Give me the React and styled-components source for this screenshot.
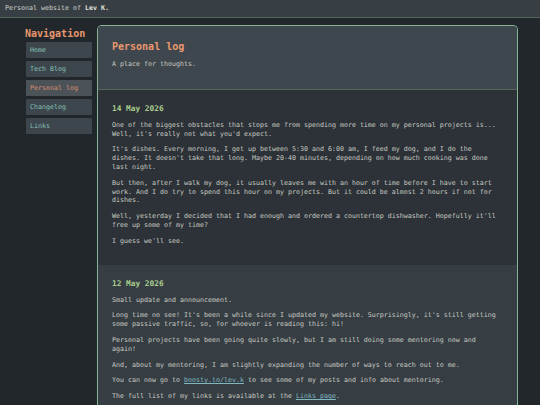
import React from 'react'
import styled, { createGlobalStyle } from 'styled-components'

const GlobalStyle = createGlobalStyle`
    html, body {
        margin: 0;
        padding: 0;
        background: #22272c;
        font-family: "DejaVu Sans Mono", "Liberation Mono", monospace;
        color: #c9c9c1;
    }
    * {
        box-sizing: border-box;
    }
`

const navItems = [
    { label: 'Home' },
    { label: 'Tech Blog' },
    { label: 'Personal log', active: true },
    { label: 'Changelog' },
    { label: 'Links' },
]

function App() {
    return (
        <>
            <GlobalStyle />
            <Page>
                <TopBar>
                    Personal website of <strong>Lev K.</strong>
                </TopBar>
                <Layout>
                    <Nav>
                        <NavTitle>Navigation</NavTitle>
                        {navItems.map((item) => (
                            <NavItem key={item.label} $active={item.active}>
                                {item.label}
                            </NavItem>
                        ))}
                    </Nav>
                    <Card>
                        <CardHeader>
                            <Title>Personal log</Title>
                            <Subtitle>A place for thoughts.</Subtitle>
                        </CardHeader>
                        <Post $tone="dark">
                            <PostDate>14 May 2026</PostDate>
                            <P>One of the biggest obstacles that stops me from spending more time on my personal projects is... Well, it's really not what you'd expect.</P>
                            <P>It's dishes. Every morning, I get up between 5:30 and 6:00 am, I feed my dog, and I do the dishes. It doesn't take that long. Maybe 20-40 minutes, depending on how much cooking was done last night.</P>
                            <P>But then, after I walk my dog, it usually leaves me with an hour of time before I have to start work. And I do try to spend this hour on my projects. But it could be almost 2 hours if not for dishes.</P>
                            <P>Well, yesterday I decided that I had enough and ordered a countertop dishwasher. Hopefully it'll free up some of my time?</P>
                            <P>I guess we'll see.</P>
                        </Post>
                        <Post $tone="light">
                            <PostDate>12 May 2026</PostDate>
                            <P>Small update and announcement.</P>
                            <P>Long time no see! It's been a while since I updated my website. Surprisingly, it's still getting some passive traffic, so, for whoever is reading this: hi!</P>
                            <P>Personal projects have been going quite slowly, but I am still doing some mentoring now and again!</P>
                            <P>And, about my mentoring, I am slightly expanding the number of ways to reach out to me.</P>
                            <P>You can now go to <A href="#">boosty.to/lev.k</A> to see some of my posts and info about mentoring.</P>
                            <P>The full list of my links is available at the <A href="#">Links page</A>.</P>
                        </Post>
                    </Card>
                </Layout>
            </Page>
        </>
    )
}

const Page = styled.div`
    width: 540px;
    height: 405px;
    overflow: hidden;
    font-size: 6.65px;
    line-height: 8.8px;
`

const TopBar = styled.header`
    height: 18px;
    padding: 4px 5px 0;
    background: #373e44;
    border-bottom: 1px solid #4f6658;
    color: #d0d0c8;

    strong {
        font-weight: 700;
        color: #e4e4dc;
    }
`

const Layout = styled.div`
    display: flex;
    align-items: flex-start;
    gap: 5px;
    padding: 7px 22px 0 25px;
`

const Nav = styled.nav`
    width: 67px;
    flex-shrink: 0;
    display: flex;
    flex-direction: column;
    gap: 3px;
    padding-top: 2px;
`

const NavTitle = styled.h2`
    margin: 0 0 -2px;
    font-size: 10px;
    line-height: 14px;
    font-weight: 700;
    color: #e8976d;
`

const NavItem = styled.div`
    margin-left: 1px;
    width: 66px;
    height: 16px;
    padding: 0 4px;
    display: flex;
    align-items: center;
    background: ${(p) => (p.$active ? '#4b5358' : '#3c464c')};
    color: ${(p) => (p.$active ? '#dc8d70' : '#86c0b5')};
`

const Card = styled.main`
    flex: 1;
    min-height: 420px;
    border: 1px solid #86b596;
    border-bottom: none;
    border-radius: 5px 5px 0 0;
    overflow: hidden;
    background: #2c3238;
`

const CardHeader = styled.div`
    padding: 15px 14px 20px;
    background: #3f474e;
    border-bottom: 1px solid #56655c;
`

const Title = styled.h1`
    margin: 0 0 7px;
    font-size: 10px;
    line-height: 12px;
    font-weight: 700;
    color: #e8976d;
`

const Subtitle = styled.p`
    margin: 0;
    color: #c9c9c1;
`

const Post = styled.section`
    padding: 14px 14px 19px;
    background: ${(p) => (p.$tone === 'light' ? '#363e44' : '#2c3238')};
`

const PostDate = styled.h3`
    margin: 0 0 7px;
    font-size: 7.8px;
    line-height: 10px;
    font-weight: 700;
    color: #a9cc8d;
`

const P = styled.p`
    margin: 0 0 7px;

    &:last-child {
        margin-bottom: 0;
    }
`

const A = styled.a`
    color: #7fb8c0;
    text-decoration: underline;
`

export default App
